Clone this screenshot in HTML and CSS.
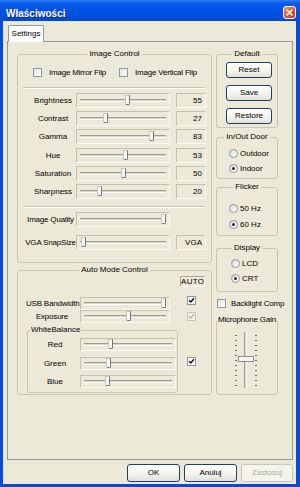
FILE: index.html
```html
<!DOCTYPE html>
<html>
<head>
<meta charset="utf-8">
<title>Właściwości</title>
<link rel="stylesheet" href="styles.css">
</head>
<body>
<div class="window">
  <div class="titlebar">
    <span class="title">Właściwości</span>
    <span class="close"><svg width="11" height="11" viewBox="0 0 11 11"><path d="M3 3 L8 8 M8 3 L3 8" stroke="#fff" stroke-width="1.6" stroke-linecap="round"/></svg></span>
  </div>
  <div class="frame">
    <div class="tabs"><div class="tab">Settings</div></div>
    <div class="panel">
      <div class="col-left">
        <div class="group g-image">
          <div class="glabel">Image Control</div>
          <div class="flips">
            <span class="cb"></span><span class="cbtext t1">Image Mirror Flip</span>
            <span class="cb"></span><span class="cbtext t2">Image Vertical Flip</span>
          </div>
          <div class="sep"></div>
          <div class="sliders">
            <div class="srow"><span class="slabel">Brightness</span><div class="slider"><div class="chan"><div class="rng"><span class="thumb" style="left:55%"></span></div></div></div><span class="val">55</span></div>
            <div class="srow"><span class="slabel">Contrast</span><div class="slider"><div class="chan"><div class="rng"><span class="thumb" style="left:27%"></span></div></div></div><span class="val">27</span></div>
            <div class="srow"><span class="slabel">Gamma</span><div class="slider"><div class="chan"><div class="rng"><span class="thumb" style="left:85%"></span></div></div></div><span class="val">83</span></div>
            <div class="srow"><span class="slabel">Hue</span><div class="slider"><div class="chan"><div class="rng"><span class="thumb" style="left:53%"></span></div></div></div><span class="val">53</span></div>
            <div class="srow"><span class="slabel">Saturation</span><div class="slider"><div class="chan"><div class="rng"><span class="thumb" style="left:50%"></span></div></div></div><span class="val">50</span></div>
            <div class="srow"><span class="slabel">Sharpness</span><div class="slider"><div class="chan"><div class="rng"><span class="thumb" style="left:20%"></span></div></div></div><span class="val">20</span></div>
          </div>
          <div class="sep sep2"></div>
          <div class="srow wide r-iq"><span class="slabel">Image Quality</span><div class="slider"><div class="chan"><div class="rng"><span class="thumb" style="left:100%"></span></div></div></div></div>
          <div class="srow wide r-vga"><span class="slabel">VGA SnapSize</span><div class="slider"><div class="chan"><div class="rng"><span class="thumb" style="left:0%"></span></div></div></div><span class="val">VGA</span></div>
        </div>

        <div class="group g-auto">
          <div class="glabel">Auto Mode Control</div>
          <div class="autorow"><span class="autobox">AUTO</span></div>
          <div class="arow r-usb"><span class="alabel">USB Bandwidth</span><div class="slider"><div class="chan"><div class="rng"><span class="thumb" style="left:100%"></span></div></div></div><span class="cb checked top"><svg width="7" height="7" viewBox="0 0 7 7"><path d="M1 3.2 L2.8 5 L6 1.2" fill="none" stroke="#111" stroke-width="1.5"/></svg></span></div>
          <div class="arow"><span class="alabel">Exposure</span><div class="slider"><div class="chan"><div class="rng"><span class="thumb" style="left:54%"></span></div></div></div><span class="cb checked disabled"><svg width="7" height="7" viewBox="0 0 7 7"><path d="M1 3.2 L2.8 5 L6 1.2" fill="none" stroke="#B5B2A4" stroke-width="1.3"/></svg></span></div>
          <div class="wbrow">
            <div class="group g-wb">
              <div class="glabel left">WhiteBalance</div>
              <div class="wrows">
                <div class="wrow"><span class="wlabel">Red</span><div class="slider"><div class="chan"><div class="rng"><span class="thumb" style="left:28%"></span></div></div></div></div>
                <div class="wrow"><span class="wlabel">Green</span><div class="slider"><div class="chan"><div class="rng"><span class="thumb" style="left:26%"></span></div></div></div></div>
                <div class="wrow"><span class="wlabel">Blue</span><div class="slider"><div class="chan"><div class="rng"><span class="thumb" style="left:24%"></span></div></div></div></div>
              </div>
            </div>
            <span class="cb checked wbcb"><svg width="7" height="7" viewBox="0 0 7 7"><path d="M1 3.2 L2.8 5 L6 1.2" fill="none" stroke="#111" stroke-width="1.5"/></svg></span>
          </div>
        </div>
      </div>

      <div class="col-right">
        <div class="group g-default">
          <div class="glabel">Default</div>
          <div class="btn small">Reset</div>
          <div class="btn small">Save</div>
          <div class="btn small">Restore</div>
        </div>
        <div class="group g-inout">
          <div class="glabel">In/Out Door</div>
          <div class="rrow first"><span class="radio"></span><span>Outdoor</span></div>
          <div class="rrow"><span class="radio on"></span><span>Indoor</span></div>
        </div>
        <div class="group g-flicker">
          <div class="glabel">Flicker</div>
          <div class="rrow first"><span class="radio"></span><span>50 Hz</span></div>
          <div class="rrow r2"><span class="radio on"></span><span>60 Hz</span></div>
        </div>
        <div class="group g-display">
          <div class="glabel">Display</div>
          <div class="rrow first"><span class="radio"></span><span>LCD</span></div>
          <div class="rrow"><span class="radio on"></span><span>CRT</span></div>
        </div>
        <div class="backlight"><span class="cb"></span><span>Backlight Comp</span></div>
        <div class="group g-mic">
          <div class="glabel mic">Microphone Gain</div>
          <svg class="vslider" width="26" height="60" viewBox="0 0 26 60">
            <g stroke="#6E6D66" stroke-width="1">
              <path d="M1 5.5h2 M1 10.5h2 M1 15.5h2 M1 20.5h2 M1 25.5h2 M1 30.5h2 M1 35.5h2 M1 40.5h2 M1 45.5h2 M1 50.5h2 M1 55.5h2"/>
              <path d="M21 5.5h2 M21 10.5h2 M21 15.5h2 M21 20.5h2 M21 25.5h2 M21 30.5h2 M21 35.5h2 M21 40.5h2 M21 45.5h2 M21 50.5h2 M21 55.5h2"/>
            </g>
            <path d="M10.5 2v56" stroke="#9D9C95" stroke-width="1"/>
            <path d="M12.5 2v56" stroke="#FFFFFF" stroke-width="1"/>
            <path d="M11.5 2v56" stroke="#D8D5C8" stroke-width="1"/>
            <rect x="4.5" y="26.5" width="15" height="5" fill="#F6F5F0" stroke="#8A8E92"/>
          </svg>
        </div>
      </div>
    </div>
    <div class="buttons">
      <div class="btn b-ok">OK</div>
      <div class="btn b-cancel">Anuluj</div>
      <div class="btn b-apply disabled">Zastosuj</div>
    </div>
  </div>
</div>
</body>
</html>
```

FILE: styles.css
```css
* { box-sizing: border-box; }
html, body { margin: 0; padding: 0; }
body {
  width: 300px; height: 487px; overflow: hidden;
  font-family: "Liberation Sans", Arial, sans-serif;
  font-size: 8px; color: #000; background: #fff;
}
.window {
  width: 300px; height: 487px;
  background: #0A48D8;
  display: flex; flex-direction: column;
}
.titlebar {
  height: 21px; flex: none;
  display: flex; justify-content: space-between; align-items: flex-start;
  background: linear-gradient(#2F7DF5 0%, #0A5CEB 15%, #0053E4 45%, #0050DD 80%, #0048CF 100%);
  color: #fff;
}
.title {
  font-size: 10px; font-weight: bold; line-height: 13px;
  margin: 7px 0 0 6px;
  text-shadow: 1px 1px 0 #0A2A80;
}
.close {
  width: 13px; height: 13px; margin: 6px 4px 0 0;
  border: 1px solid #fff; border-radius: 3px;
  background: linear-gradient(135deg, #F0906E, #D6502A 60%, #C13E1C);
  display: flex; align-items: center; justify-content: center;
}
.frame {
  flex: 1; margin: 0 4px 3px 3px;
  background: #ECE9D8;
  padding: 4px 3px 2px 4px;
  display: flex; flex-direction: column;
}
.tabs { height: 16px; flex: none; padding-left: 1px; display: flex; }
.tab {
  width: 36px; height: 17px; position: relative; z-index: 1;
  border: 1px solid #919B9C; border-bottom: none; border-radius: 2px 2px 0 0;
  background: #FCFCFB;
  line-height: 15px; text-align: center;
}
.panel {
  height: 419px; flex: none;
  border: 1px solid #919B9C;
  background: #ECE9D8;
  padding: 12px 0 0 9px;
  display: flex; gap: 4px; align-items: flex-start;
}
.buttons { margin-top: 4px; height: 18px; display: flex; justify-content: flex-end; gap: 4px; }
.btn {
  height: 18px; border: 1px solid #1E3F6E; border-radius: 3px;
  background: linear-gradient(#FFFFFF, #F3F2EC 60%, #E2DFD3);
  text-align: center; line-height: 16px;
}
.b-ok, .b-cancel { width: 53px; }
.b-apply { width: 52px; }
.btn.disabled { border-color: #C9C7BA; color: #ACA899; background: #F5F4EA; }

/* group boxes */
.group {
  border: 1px solid #C9C6B5; border-radius: 3px;
  display: flex; flex-direction: column;
}
.glabel {
  width: fit-content; height: 10px; line-height: 10px;
  margin: -6px auto 0; padding: 0 2px;
  background: #ECE9D8; white-space: nowrap;
}
.glabel.left { margin-left: 2px; padding: 0 1px; }
.glabel.mic { padding: 0; }

.col-left { width: 195px; display: flex; flex-direction: column; }
.col-right { width: 62px; display: flex; flex-direction: column; }

.g-image { height: 209px; }
.flips { margin-top: 8px; height: 10px; padding-left: 15px; display: flex; align-items: center; }
.cb {
  width: 9px; height: 9px; flex: none;
  border: 1px solid #8C98A4; background: linear-gradient(135deg, #E4E3DC, #FFFFFF);
  display: flex; align-items: center; justify-content: center;
}
.cb.checked { background: #fff; }
.cb.disabled { border-color: #C6C4B7; background: #F4F3EE; }
.cbtext { white-space: nowrap; letter-spacing: -0.2px; }
.t1 { margin-left: 7px; width: 70px; }
.t2 { margin-left: 7px; }
.sep { margin: 10px 6px 0 5px; height: 2px; border-top: 1px solid #C9C6B5; border-bottom: 1px solid #FFFFFF; }
.sep2 { margin-top: 6px; }
.sliders { margin-top: 3px; display: flex; flex-direction: column; gap: 2.4px; }
.srow { height: 16px; display: flex; align-items: center; padding-left: 12px; }
.slabel { width: 46px; text-align: center; white-space: nowrap; }
.srow.wide { padding-left: 7px; }
.srow.wide .slabel { width: 51px; letter-spacing: -0.2px; }
.r-iq { margin-top: 4px; }
.r-vga { margin-top: 7px; }
.slider {
  width: 94px; height: 15px; flex: none;
  border: 1px solid; border-color: #C3C0AF #FAF9F4 #FAF9F4 #C3C0AF;
  display: flex; align-items: center; padding: 0 3px;
}
.chan {
  flex: 1; height: 3px; position: relative;
  border-top: 1px solid #9D9C95; border-bottom: 1px solid #FFFFFF;
  background: #D9D6C9;
}
.rng { position: absolute; left: 3px; right: 3px; top: 0; bottom: 0; }
.thumb {
  position: absolute; top: -5px; margin-left: -2px;
  width: 5px; height: 10px;
  border: 1px solid; border-color: #C8C7C0 #6E7478 #6E7478 #C8C7C0;
  border-radius: 0 0 2px 2px;
  background: #F7F7F3;
}
.val {
  width: 30px; height: 15px; margin-left: 6px;
  border: 1px solid; border-color: #C3C0AF #FAF9F4 #FAF9F4 #C3C0AF;
  text-align: right; padding-right: 3px; line-height: 13px;
}

.g-auto { margin-top: 7px; height: 125px; }
.autorow { margin-top: 1px; height: 11px; display: flex; justify-content: flex-end; padding-right: 6px; }
.autobox {
  width: 25px; height: 11px;
  border: 1px solid; border-color: #A9A694 #FFFFFF #FFFFFF #A9A694;
  text-align: center; line-height: 9px; letter-spacing: 0.3px;
}
.arow { height: 13px; display: flex; align-items: center; padding-left: 8px; }
.r-usb { margin-top: 10px; }
.alabel { width: 52px; text-align: center; white-space: nowrap; letter-spacing: -0.2px; }
.arow .slider { width: 90px; height: 13px; margin-left: 2px; }
.arow .cb { margin-left: 17px; }
.arow .cb.top { align-self: flex-start; margin-top: -1px; }
.wbrow { margin-top: 7px; display: flex; align-items: center; }
.g-wb { margin-left: 9px; width: 151px; height: 63px; }
.wrows { margin-top: 3px; display: flex; flex-direction: column; gap: 5.5px; }
.wrow { height: 13px; display: flex; align-items: center; padding-left: 2px; }
.wlabel { width: 50px; text-align: center; }
.wrow .slider { width: 96px; height: 13px; }
.wbcb { margin-left: 9px; }

.g-default { height: 74px; align-items: flex-start; }
.btn.small { width: 46px; height: 16px; line-height: 14px; margin-left: 9px; }
.g-default .btn:nth-of-type(2) { margin-top: 3px; }
.g-default .btn + .btn { margin-top: 7px; }
.g-default .glabel { margin-left: auto; margin-right: auto; }
.g-inout { margin-top: 9px; height: 42px; }
.g-flicker { margin-top: 8px; height: 49px; }
.g-display { margin-top: 12px; height: 44px; }
.rrow { height: 10px; display: flex; align-items: center; padding-left: 12px; margin-top: 5px; }
.rrow span:last-child { margin-left: 2px; }
.g-inout .rrow.first { margin-top: 6px; }
.g-flicker .rrow.first { margin-top: 11px; }
.g-flicker .rrow.r2 { margin-top: 6px; }
.g-display .rrow { padding-left: 14px; }
.radio {
  width: 9px; height: 9px; border-radius: 50%;
  border: 1px solid #8A96A2; background: linear-gradient(135deg, #DCDBD4, #FFFFFF);
  display: flex; align-items: center; justify-content: center;
}
.radio.on::after { content: ""; width: 3px; height: 3px; border-radius: 50%; background: #2A2A2A; }
.backlight { margin-top: 6px; height: 10px; display: flex; align-items: center; padding-left: 1px; white-space: nowrap; }
.backlight span:last-child { margin-left: 5px; letter-spacing: -0.2px; }
.g-mic { margin-top: 12px; height: 75px; align-items: center; }
.g-mic .glabel { letter-spacing: -0.2px; }
.vslider { margin-top: 5px; display: block; }
```
